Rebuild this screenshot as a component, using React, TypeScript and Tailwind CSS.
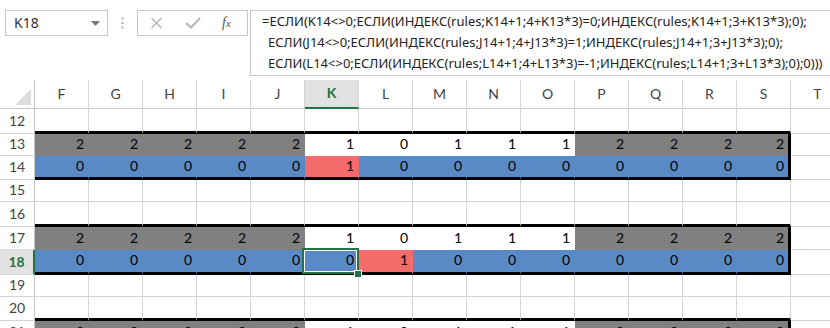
import React from "react";

type Fill = "none" | "gray" | "blue" | "red" | "white";

const COLS = ["F", "G", "H", "I", "J", "K", "L", "M", "N", "O", "P", "Q", "R", "S", "T"];

const TOP_VALS = [2, 2, 2, 2, 2, 1, 0, 1, 1, 1, 2, 2, 2, 2];
const TOP_FILL: Fill[] = ["gray", "gray", "gray", "gray", "gray", "white", "white", "white", "white", "white", "gray", "gray", "gray", "gray"];

type RowSpec = {
  n: number;
  h: string;
  kind: "empty" | "top" | "bottom";
  thick: boolean;
  vals?: (number | string)[];
  fills?: Fill[];
  selected?: boolean;
};

const bottom14: Fill[] = ["blue", "blue", "blue", "blue", "blue", "red", "blue", "blue", "blue", "blue", "blue", "blue", "blue", "blue"];
const bottom18: Fill[] = ["blue", "blue", "blue", "blue", "blue", "blue", "red", "blue", "blue", "blue", "blue", "blue", "blue", "blue"];

const ROWS: RowSpec[] = [
  { n: 12, h: "h-[25px]", kind: "empty", thick: true },
  { n: 13, h: "h-[22px]", kind: "top", thick: false, vals: TOP_VALS, fills: TOP_FILL },
  { n: 14, h: "h-[24px]", kind: "bottom", thick: true, vals: [0, 0, 0, 0, 0, 1, 0, 0, 0, 0, 0, 0, 0, 0], fills: bottom14 },
  { n: 15, h: "h-[22px]", kind: "empty", thick: false },
  { n: 16, h: "h-[25px]", kind: "empty", thick: true },
  { n: 17, h: "h-[23px]", kind: "top", thick: false, vals: TOP_VALS, fills: TOP_FILL },
  { n: 18, h: "h-[25px]", kind: "bottom", thick: true, vals: [0, 0, 0, 0, 0, 0, 1, 0, 0, 0, 0, 0, 0, 0], fills: bottom18, selected: true },
  { n: 19, h: "h-[22px]", kind: "empty", thick: false },
  { n: 20, h: "h-[24px]", kind: "empty", thick: true },
  { n: 21, h: "h-[23px]", kind: "top", thick: false, vals: TOP_VALS, fills: TOP_FILL },
];

function fillClass(f: Fill): string {
  if (f === "gray") return "bg-[#808080] border-r-[#808080]";
  if (f === "blue") return "bg-[#5a8ac6] border-r-[#5a8ac6]";
  if (f === "red") return "bg-[#f66b6c] border-r-[#f66b6c]";
  if (f === "white") return "bg-white border-r-white";
  return "bg-white border-r-[#d4d4d4]";
}

function Cell({ row, ci }: { row: RowSpec; ci: number }) {
  const inBlock = ci < 14;
  const isS = ci === 13;
  const isBlockRow = row.kind !== "empty";
  const fill: Fill = isBlockRow && inBlock && row.fills ? row.fills[ci] : "none";
  const val = isBlockRow && inBlock && row.vals ? row.vals[ci] : "";

  let bottom = "border-b border-b-[#d4d4d4]";
  if (row.thick && inBlock) bottom = "border-b-[3px] border-b-black";
  else if (row.kind === "top" && inBlock) bottom = "border-b-0";

  const right = isBlockRow && isS ? "border-r-[3px] !border-r-black" : "border-r";
  const sel = row.selected && ci === 5;

  return (
    <div
      className={`relative shrink-0 w-[54px] ${row.h} ${right} ${bottom} ${fillClass(fill)} flex items-center justify-end pr-[4px] text-[14px] text-black font-['Lato',sans-serif] leading-none`}
    >
      <span className="pb-[2px]">{val}</span>
      {sel && (
        <>
          <div className="absolute left-[-3px] top-[-2px] w-[57px] h-[26px] border-2 border-[#217346] shadow-[inset_0_0_0_1px_white] z-10" />
          <div className="absolute left-[49px] top-[20px] w-[6px] h-[6px] bg-[#217346] border border-white z-20 box-content" />
        </>
      )}
    </div>
  );
}

function GridRow({ row }: { row: RowSpec }) {
  const sel = row.selected;
  return (
    <div className="flex">
      <div
        className={`shrink-0 w-[35px] ${row.h} flex items-center justify-center text-[14px] font-['Lato',sans-serif] leading-none border-b border-b-[#d4d4d4] ${
          sel
            ? "bg-[#e1e1e1] border-r-2 border-r-[#217346] text-[#217346] font-bold"
            : "bg-white border-r border-r-[#c8c8c8] text-[#444]"
        }`}
      >
        <span className="pb-[1px]">{row.n}</span>
      </div>
      {COLS.map((_, ci) => (
        <Cell key={ci} row={row} ci={ci} />
      ))}
    </div>
  );
}

function Header() {
  return (
    <div className="flex h-[29px]">
      <div className="shrink-0 w-[35px] h-full border-r border-r-[#c8c8c8] border-b border-b-[#c8c8c8] relative flex items-end justify-end pr-[3px] pb-[3px]">
        <svg width="16" height="16" viewBox="0 0 16 16">
          <polygon points="16,0 16,16 0,16" fill="#dcdcdc" />
        </svg>
      </div>
      {COLS.map((c) => {
        const active = c === "K";
        return (
          <div
            key={c}
            className={`shrink-0 w-[54px] h-full flex items-center justify-center text-[14px] font-['Lato',sans-serif] leading-none border-r border-r-[#d4d4d4] ${
              active
                ? "bg-[#e1e1e1] text-[#217346] font-bold border-b-2 border-b-[#217346]"
                : "bg-white text-[#444] border-b border-b-[#c8c8c8]"
            }`}
          >
            <span className="pb-[1px]">{c}</span>
          </div>
        );
      })}
    </div>
  );
}

function TopBar() {
  return (
    <div className="h-[80px] flex items-start pt-[10px] pl-[5px]">
      <div className="shrink-0 w-[103px] h-[26px] border border-[#c6c6c6] flex items-center justify-between pl-[8px] pr-[7px]">
        <span className="text-[14px] text-[#333] font-['Noto_Sans',sans-serif] leading-none">K18</span>
        <svg width="9" height="5" viewBox="0 0 9 5">
          <polygon points="0,0 9,0 4.5,5" fill="#777" />
        </svg>
      </div>
      <div className="shrink-0 w-[29px] h-[26px] flex items-center justify-center">
        <svg width="3" height="12" viewBox="0 0 3 12">
          <rect x="0.5" y="0.5" width="2" height="2" fill="#b0b0b0" />
          <rect x="0.5" y="5" width="2" height="2" fill="#b0b0b0" />
          <rect x="0.5" y="9.5" width="2" height="2" fill="#b0b0b0" />
        </svg>
      </div>
      <div className="shrink-0 w-[111px] h-[26px] border border-[#c6c6c6] flex items-center pl-[12px]">
        <svg width="13" height="12" viewBox="0 0 13 12" className="shrink-0">
          <path d="M1.5 1 L11.5 11 M11.5 1 L1.5 11" stroke="#b4b4b4" strokeWidth="1.5" fill="none" />
        </svg>
        <svg width="16" height="12" viewBox="0 0 16 12" className="ml-[22px] shrink-0">
          <path d="M1 6 L6 10.5 L15 1" stroke="#b4b4b4" strokeWidth="2" fill="none" />
        </svg>
        <span className="ml-[21px] text-[14px] italic text-[#555] font-['Liberation_Serif',serif] leading-none">
          f<span className="text-[11px]">x</span>
        </span>
      </div>
      <div className="shrink-0 ml-[2px] w-[600px] h-[66px] border border-[#c6c6c6] pl-[11px] pt-0 font-['Noto_Sans',sans-serif] text-[13px] text-[#222] leading-[21px] tracking-[0px]">
        <div className="whitespace-nowrap">=ЕСЛИ(K14&lt;&gt;0;ЕСЛИ(ИНДЕКС(rules;K14+1;4+K13*3)=0;ИНДЕКС(rules;K14+1;3+K13*3);0);</div>
        <div className="whitespace-nowrap pl-[6px]">ЕСЛИ(J14&lt;&gt;0;ЕСЛИ(ИНДЕКС(rules;J14+1;4+J13*3)=1;ИНДЕКС(rules;J14+1;3+J13*3);0);</div>
        <div className="whitespace-nowrap pl-[6px]">ЕСЛИ(L14&lt;&gt;0;ЕСЛИ(ИНДЕКС(rules;L14+1;4+L13*3)=-1;ИНДЕКС(rules;L14+1;3+L13*3);0);0)))</div>
      </div>
    </div>
  );
}

export default function App() {
  return (
    <div className="w-[830px] h-[328px] overflow-hidden bg-white">
      <TopBar />
      <Header />
      {ROWS.map((r) => (
        <GridRow key={r.n} row={r} />
      ))}
    </div>
  );
}
